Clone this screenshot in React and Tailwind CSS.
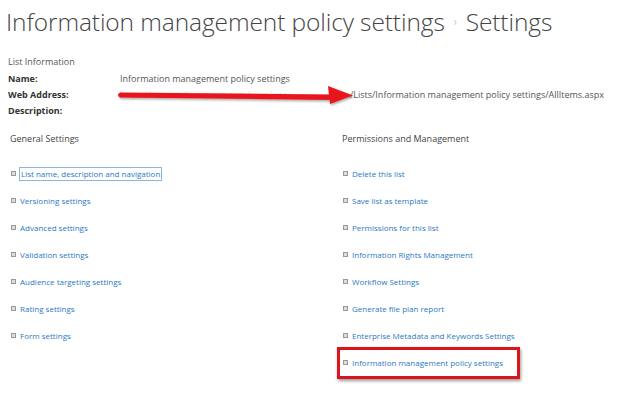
import React from 'react'

const general = [
  'List name, description and navigation',
  'Versioning settings',
  'Advanced settings',
  'Validation settings',
  'Audience targeting settings',
  'Rating settings',
  'Form settings',
]

const permissions = [
  'Delete this list',
  'Save list as template',
  'Permissions for this list',
  'Information Rights Management',
  'Workflow Settings',
  'Generate file plan report',
  'Enterprise Metadata and Keywords Settings',
  'Information management policy settings',
]

export default function App() {
  return (
    <div className="relative w-[624px] h-[399px] overflow-hidden bg-white text-[#444] font-['Open_Sans',sans-serif]">
      {/* Page title */}
      <h1 className="pl-[6px] h-[52px] pb-[8px] text-[24.5px] font-light leading-[40px] tracking-[-0.1px] text-[#444] flex items-center gap-[9px]">
        <span>Information management policy settings</span>
        <span className="text-[12px] text-[#aaa]">›</span>
        <span>Settings</span>
      </h1>

      {/* List information */}
      <div className="pl-[8px] pt-[3px] text-[9px]">
        <p className="text-[#555] h-[16px]">List Information</p>
        <InfoRow label="Name:">Information management policy settings</InfoRow>
        <InfoRow label="Web Address:">
          <span className="w-[230px] text-[#e4e4e4] overflow-hidden whitespace-nowrap">https://tenant.sharepoint.com/sites/site</span>
          <span>/Lists/Information management policy settings/AllItems.aspx</span>
        </InfoRow>
        <InfoRow label="Description:" />
      </div>

      {/* Settings columns */}
      <div className="grid grid-cols-[332px_1fr] pl-[10px] pt-[13px]">
        <Section title="General Settings" items={general} focused={0} />
        <Section title="Permissions and Management" items={permissions} highlighted={7} />
      </div>

      {/* Red arrow over the web address */}
      <svg className="absolute left-[110px] top-[80px]" width="256" height="30" viewBox="110 80 256 30">
        <defs>
          <filter id="sh" x="-5%" y="-50%" width="110%" height="200%">
            <feDropShadow dx="1" dy="1.5" stdDeviation="1" floodColor="#000" floodOpacity="0.35" />
          </filter>
        </defs>
        <g filter="url(#sh)">
          <path d="M120 92.5 L334 94.5 L334 100 L120 97.5 Q116 95 120 92.5 Z" fill="#e8151b" />
          <path d="M328 86 L353 95.5 L330 104 Z" fill="#e8151b" />
        </g>
      </svg>
    </div>
  )
}

function InfoRow({ label, children }) {
  return (
    <div className="flex h-[16px] items-center">
      <span className="w-[112px] font-bold text-[#333]">{label}</span>
      <span className="flex text-[#555]">{children}</span>
    </div>
  )
}

function Section({ title, items, focused, highlighted }) {
  return (
    <div>
      <h2 className="text-[9px] text-[#444] h-[27px]">{title}</h2>
      <ul className="pt-[1px]">
        {items.map((item, i) => (
          <li key={item} className="h-[27px] flex items-center">
            <span
              className={
                i === highlighted
                  ? 'flex items-center -ml-[5px] pl-[2px] pr-[14px] h-[32px] border-[3px] border-[#d9141b] shadow-[1px_2px_3px_rgba(0,0,0,0.4)]'
                  : 'flex items-center'
              }
            >
              <span className="w-[5px] h-[5px] border border-[#999] bg-[#ddd] mr-[4px] ml-[1px]" />
              <a
                href="#"
                className={
                  'text-[8px] text-[#2b79c2] ' +
                  (i === focused ? 'outline outline-1 outline-[#8db4e0] px-[1px]' : '')
                }
              >
                {item}
              </a>
            </span>
          </li>
        ))}
      </ul>
    </div>
  )
}
